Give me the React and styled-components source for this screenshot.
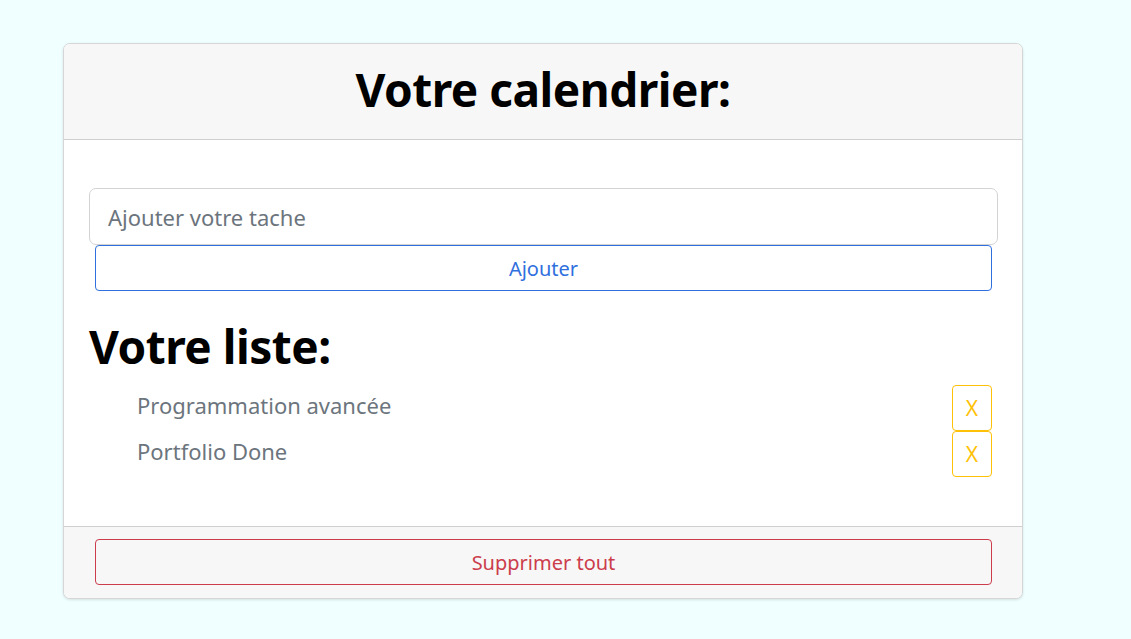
import React from 'react';
import styled, { createGlobalStyle } from 'styled-components';

const GlobalStyle = createGlobalStyle`
  html, body {
    margin: 0;
    padding: 0;
    background: #f0ffff;
  }
  body {
    font-family: 'Noto Sans', 'Open Sans', sans-serif;
    color: #212529;
  }
`;

const Page = styled.div`
  padding: 43px 0 40px 63px;
`;

const Card = styled.div`
  width: 960px;
  box-sizing: border-box;
  background: #ffffff;
  border: 1px solid #d6d6d6;
  border-radius: 7px;
  box-shadow: 0 1px 3px rgba(0, 0, 0, 0.12);
  overflow: hidden;
`;

const CardHeader = styled.div`
  height: 96px;
  box-sizing: border-box;
  padding-bottom: 6px;
  background: #f7f7f7;
  border-bottom: 1px solid #cfcfcf;
  display: flex;
  align-items: center;
  justify-content: center;
`;

const Title = styled.h1`
  margin: 0;
  font-size: 46px;
  font-weight: 700;
  color: #000;
  letter-spacing: -0.5px;
`;

const CardBody = styled.div`
  padding: 48px 24px 49px 25px;
  display: flex;
  flex-direction: column;
`;

const Input = styled.input`
  height: 57px;
  box-sizing: border-box;
  border: 1px solid #d3d3d3;
  border-radius: 7px;
  padding: 0 18px;
  font-family: inherit;
  font-size: 22px;
  color: #495057;
  outline: none;

  &::placeholder {
    color: #6c757d;
  }
`;

const OutlineButton = styled.button`
  margin: 0 6px;
  height: 46px;
  box-sizing: border-box;
  background: transparent;
  border: 1px solid ${(p) => p.$color};
  border-radius: 4px;
  color: ${(p) => p.$color};
  font-family: inherit;
  font-size: 20px;
  cursor: pointer;
`;

const ListTitle = styled.h2`
  margin: 28px 0 11px;
  font-size: 46px;
  font-weight: 700;
  color: #000;
  line-height: 1.2;
  letter-spacing: -0.5px;
`;

const List = styled.ul`
  list-style: none;
  margin: 0;
  padding: 0 6px 0 48px;
  display: flex;
  flex-direction: column;
`;

const Item = styled.li`
  display: flex;
  justify-content: space-between;
  align-items: flex-start;
`;

const ItemText = styled.span`
  font-size: 22px;
  color: #6c757d;
  line-height: 40px;
`;

const RemoveButton = styled.button`
  width: 40px;
  height: 46px;
  box-sizing: border-box;
  background: transparent;
  border: 1px solid #ffc107;
  border-radius: 4px;
  color: #ffc107;
  font-family: inherit;
  font-size: 21px;
  padding: 0;
  cursor: pointer;
`;

const CardFooter = styled.div`
  background: #f7f7f7;
  border-top: 1px solid #cfcfcf;
  padding: 12px 24px 13px 25px;
  display: flex;
  flex-direction: column;
`;

const tasks = ['Programmation avancée', 'Portfolio Done'];

export default function App() {
  return (
    <>
      <GlobalStyle />
      <Page>
        <Card>
          <CardHeader>
            <Title>Votre calendrier:</Title>
          </CardHeader>
          <CardBody>
            <Input placeholder="Ajouter votre tache" />
            <OutlineButton $color="#2f6fde">Ajouter</OutlineButton>
            <ListTitle>Votre liste:</ListTitle>
            <List>
              {tasks.map((task) => (
                <Item key={task}>
                  <ItemText>{task}</ItemText>
                  <RemoveButton>X</RemoveButton>
                </Item>
              ))}
            </List>
          </CardBody>
          <CardFooter>
            <OutlineButton $color="#cc3d4c">Supprimer tout</OutlineButton>
          </CardFooter>
        </Card>
      </Page>
    </>
  );
}
